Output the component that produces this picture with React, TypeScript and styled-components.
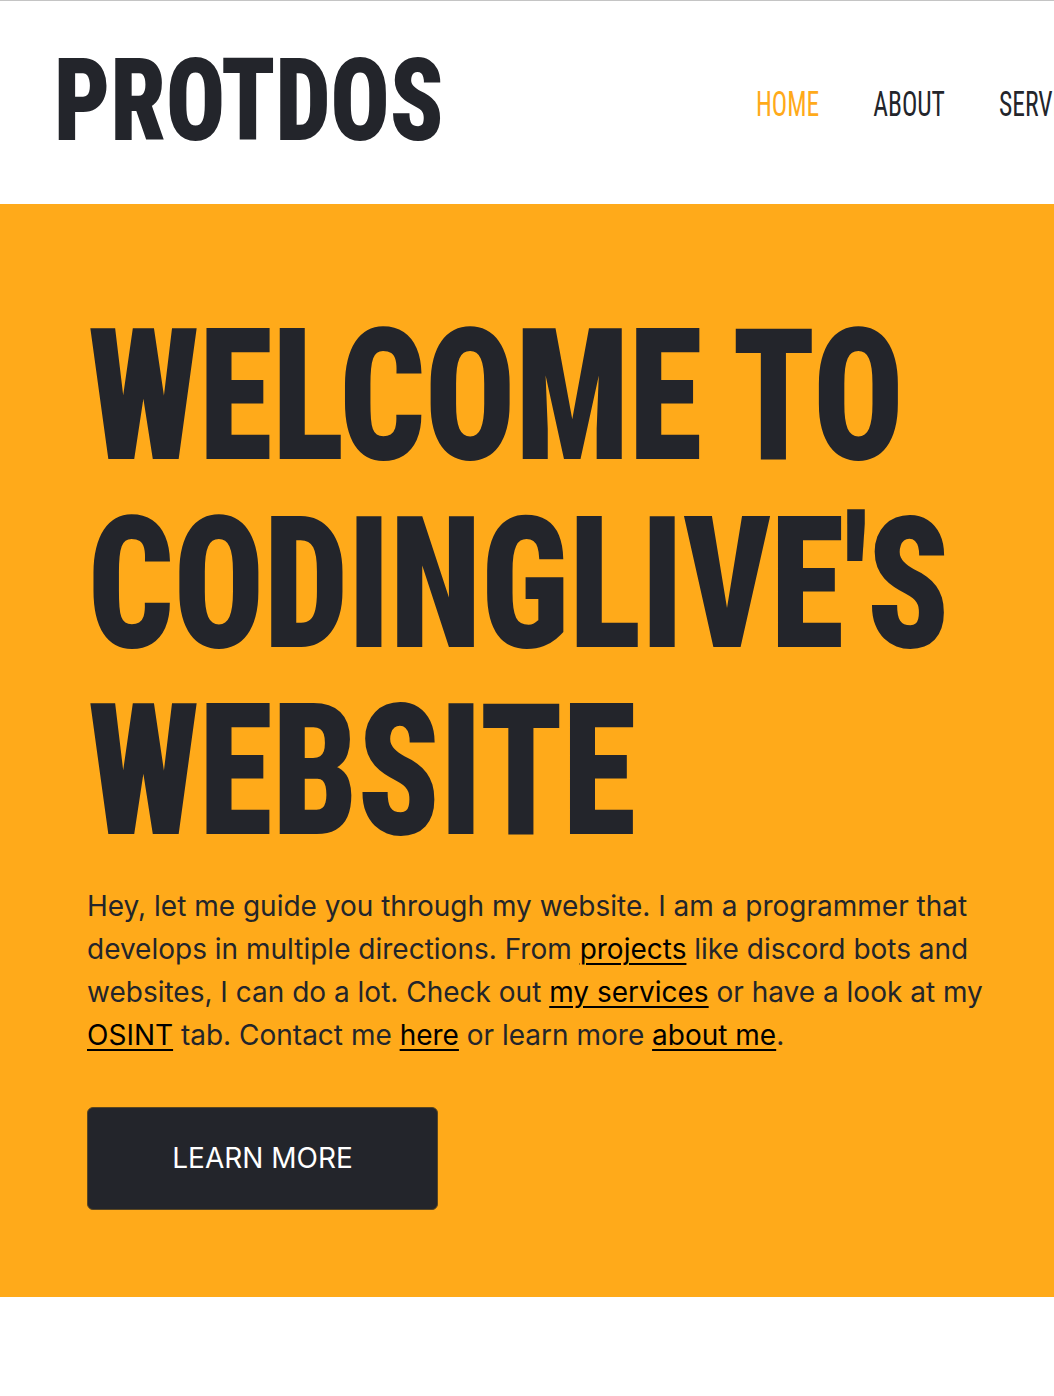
import React from "react";
import styled, { createGlobalStyle } from "styled-components";

const INK = "#23252b";
const ORANGE = "#ffaa1a";

const GlobalStyle = createGlobalStyle`
  html, body { margin: 0; padding: 0; background: #ffffff; }
  body { overflow-x: hidden; }
  #root { min-height: 1396px; }
`;

const Page = styled.div`
  width: 1054px;
  min-height: 1396px;
  overflow: hidden;
  background: #ffffff;
`;

const Header = styled.header`
  display: flex;
  align-items: flex-start;
  height: 204px;
  padding: 42px 0 0 54px;
  box-sizing: border-box;
  border-top: 1px solid #c4c4c4;
  overflow: hidden;
  background: #ffffff;
`;

const Logo = styled.a`
  flex-shrink: 0;
  display: block;
  font-family: Roboto, "Open Sans", sans-serif;
  font-stretch: 75%;
  font-weight: 900;
  font-size: 115px;
  line-height: 1;
  color: ${INK};
  text-decoration: none;
  white-space: nowrap;
  transform: scaleX(0.853);
  transform-origin: left center;
`;

const Nav = styled.nav`
  display: flex;
  flex-shrink: 0;
  gap: 74px;
  margin: 44px 0 0 245px;
  transform: scaleX(0.73);
  transform-origin: left center;
`;

const NavLink = styled.a<{ $active?: boolean }>`
  font-family: Roboto, "Open Sans", sans-serif;
  font-stretch: 75%;
  font-weight: 400;
  font-size: 35px;
  line-height: 1;
  color: ${(p) => (p.$active ? ORANGE : INK)};
  text-decoration: none;
  white-space: nowrap;
`;

const Hero = styled.section`
  background: ${ORANGE};
  padding: 99px 54px 87px 88px;
`;

const Title = styled.h1`
  margin: 0;
  font-family: Roboto, "Open Sans", sans-serif;
  font-stretch: 75%;
  font-weight: 900;
  font-size: 183px;
  line-height: 187.5px;
  color: ${INK};
  white-space: nowrap;
  transform: scaleX(0.818);
  transform-origin: left top;
`;

const Intro = styled.p`
  margin: 19px 0 0 -1px;
  font-family: Inter, "Open Sans", sans-serif;
  font-size: 28px;
  line-height: 43.3px;
  color: ${INK};
`;

const TextLink = styled.a`
  color: #000000;
  text-decoration: underline;
  text-underline-offset: 4px;
  text-decoration-thickness: 2px;
`;

const Button = styled.a`
  display: flex;
  align-items: center;
  justify-content: center;
  width: 351px;
  height: 103px;
  margin-top: 49px;
  margin-left: -1px;
  box-sizing: border-box;
  background: ${INK};
  border: 1px solid #5a4620;
  border-radius: 6px;
  font-family: Inter, "Open Sans", sans-serif;
  font-size: 28px;
  color: #ffffff;
  text-decoration: none;
  text-transform: uppercase;
`;

export default function App() {
  return (
    <Page>
      <GlobalStyle />
      <Header>
        <Logo href="#">PROTDOS</Logo>
        <Nav>
          <NavLink href="#" $active>HOME</NavLink>
          <NavLink href="#">ABOUT</NavLink>
          <NavLink href="#">SERVICES</NavLink>
          <NavLink href="#">PROJECTS</NavLink>
        </Nav>
      </Header>
      <Hero>
        <Title>
          WELCOME TO
          <br />
          CODINGLIVE'S
          <br />
          WEBSITE
        </Title>
        <Intro>
          Hey, let me guide you through my website. I am a programmer that develops in multiple
          directions. From <TextLink href="#">projects</TextLink> like discord bots and websites, I
          can do a lot. Check out <TextLink href="#">my services</TextLink> or have a look at my{" "}
          <TextLink href="#">OSINT</TextLink> tab. Contact me <TextLink href="#">here</TextLink> or
          learn more <TextLink href="#">about me</TextLink>.
        </Intro>
        <Button href="#">Learn more</Button>
      </Hero>
    </Page>
  );
}
